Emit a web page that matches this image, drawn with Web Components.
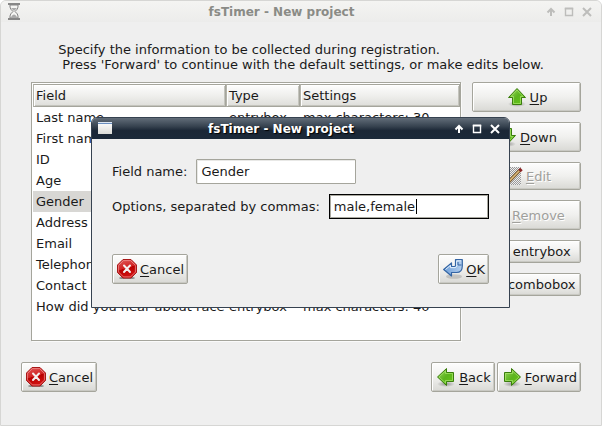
<!DOCTYPE html>
<html lang="en">
<head>
<meta charset="utf-8">
<title>fsTimer - New project</title>
<style>
  body { margin: 0; background: #fff; color: #1a1a1a; font: 13px/15px "DejaVu Sans", sans-serif; }
  .main { min-height: 100vh; }
  .dialog { position: absolute; left: 91px; right: 92px; top: 117px; }
  .intro { margin: 20px auto 10px; width: max-content; white-space: pre; }
  .setup { display: grid; grid-template-columns: 1fr 109px; gap: 11px; margin: 0 20px 0 30px; }
  .side { display: flex; flex-direction: column; gap: 10px; }
  .nav { display: flex; gap: 2px; margin: 21px 20px 33px; }
  .push { margin-left: auto; }
  .form { display: flex; flex-direction: column; gap: 10px; padding: 20px 20px 23px; }
  .actions { display: flex; justify-content: space-between; margin-top: 25px; }
</style>
</head>
<body>
<fs-window class="main" heading="fsTimer - New project" icon="hourglass">
  <div class="intro">Specify the information to be collected during registration.
 Press 'Forward' to continue with the default settings, or make edits below.</div>
  <div class="setup">
    <fs-table></fs-table>
    <div class="side">
      <fs-button icon="up"><u>U</u>p</fs-button>
      <fs-button icon="down"><u>D</u>own</fs-button>
      <fs-button icon="edit" size="medium" disabled><u>E</u>dit</fs-button>
      <fs-button icon="remove" disabled><u>R</u>emove</fs-button>
      <fs-button size="small">Add entrybox</fs-button>
      <fs-button size="small">Add combobox</fs-button>
    </div>
  </div>
  <div class="nav">
    <fs-button icon="cancel"><u>C</u>ancel</fs-button>
    <fs-button class="push" icon="back"><u>B</u>ack</fs-button>
    <fs-button icon="forward"><u>F</u>orward</fs-button>
  </div>
</fs-window>

<fs-window class="dialog" heading="fsTimer - New project" icon="window" active>
  <div class="form">
    <fs-field label="Field name:" value="Gender"></fs-field>
    <fs-field label="Options, separated by commas:" value="male,female" current></fs-field>
    <div class="actions">
      <fs-button icon="cancel"><u>C</u>ancel</fs-button>
      <fs-button icon="ok"><u>O</u>K</fs-button>
    </div>
  </div>
</fs-window>

<script>
const green = id => `<defs><linearGradient id="${id}" x1="0" y1="0" x2="1" y2="1"><stop offset="0" stop-color="#9bd860"/><stop offset=".5" stop-color="#5cb41e"/><stop offset="1" stop-color="#66c814"/></linearGradient>
  <radialGradient id="s"><stop offset="0" stop-opacity=".35"/><stop offset="1" stop-opacity="0"/></radialGradient></defs>
  <ellipse cx="10" cy="17" rx="9" ry="3" fill="url(#s)"/>`;
const arrow = (outer, inner) => green('g') + `<path d="${outer}" fill="url(#g)" stroke="#3a7d0c" stroke-linejoin="round"/><path d="${inner}" fill="none" stroke="#b5ec7c" stroke-opacity=".6"/>`;
const ICONS = {
  up: arrow('M10 1.5L18.5 10.5H14.5V17.5H5.5V10.5H1.5Z', 'M10 3L16 9.5H13.5V16.5H6.5V9.5H4Z'),
  down: arrow('M10 17.5L18.5 8.5H14.5V1.5H5.5V8.5H1.5Z', 'M10 16L16 9.5H13.5V2.5H6.5V9.5H4Z'),
  back: arrow('M1.5 10L10.5 1.5V5.5H17.5V14.5H10.5V18.5Z', 'M3 10L9.5 4V6.5H16.5V13.5H9.5V16Z'),
  forward: arrow('M18.5 10L9.5 1.5V5.5H2.5V14.5H9.5V18.5Z', 'M17 10L10.5 4V6.5H3.5V13.5H10.5V16Z'),
  cancel: `<defs><linearGradient id="r" x1="0" y1="0" x2=".3" y2="1"><stop offset="0" stop-color="#e25c5c"/><stop offset=".55" stop-color="#d02020"/><stop offset=".56" stop-color="#b80000"/><stop offset="1" stop-color="#d01010"/></linearGradient></defs>
    <ellipse cx="10" cy="19" rx="8" ry="1.5" fill="#555" opacity=".6"/>
    <path d="M6 .5H14L19.5 6V13.5L14 19H6L.5 13.5V6Z" fill="url(#r)" stroke="#a81818"/>
    <path d="M6.4 1.6H13.6L18.4 6.4V13.1L13.6 17.9H6.4L1.6 13.1V6.4Z" fill="none" stroke="#f09090" stroke-opacity=".75"/>
    <path d="M7 6.500L13 13M13 6.500L7 13" stroke="#f4eeee" stroke-width="2" stroke-linecap="round"/>`,
  ok: `<defs><linearGradient id="b" x1="0" y1="0" x2="1" y2="0"><stop offset="0" stop-color="#6f9fd8"/><stop offset="1" stop-color="#b4cfee"/></linearGradient></defs>
    <ellipse cx="11" cy="17.500" rx="8" ry="2.300" fill="#000" opacity=".14"/>
    <path d="M.7 10.500L8.500 4V7.500H11.500Q12.500 7.500 12.500 6.500V.7H19.300V7Q19.300 13.500 13.500 13.500H8.500V17Z" fill="url(#b)" stroke="#3465a4" stroke-width="1.200" stroke-linejoin="round"/>
    <path d="M2.500 10.500L7.500 6.300V8.600H12Q13.700 8.400 13.700 6.700V1.800H18.200" fill="none" stroke="#e4f0fc"/><path d="M15 3V6H18.500" fill="none" stroke="#3465a4"/>`,
  edit: `<defs><pattern id="p" width="2" height="2" patternUnits="userSpaceOnUse"><path d="M0 0H1V1H0ZM1 1H2V2H1Z" fill="#999"/></pattern></defs>
    <rect x="2" y="1" width="16" height="18" rx="1" fill="#eee"/><rect x="2" y="1" width="16" height="18" rx="1" fill="url(#p)"/>
    <path d="M5.500 16L16.500 4.500" stroke="#765b34" stroke-width="3.400"/><path d="M5.500 16L16.500 4.500" stroke="#dcb878" stroke-width="1.600"/><path d="M16.500 5L18.500 3" stroke="#8c2525" stroke-width="3.400"/>`,
  remove: `<rect x="3" y="8" width="14" height="4" rx="1" fill="#aaa"/>`,
  hourglass: `<path d="M1 1H13M1 16H13" stroke="#666" stroke-width="1.600"/><path d="M3 2V4Q3 6 6 8.500Q3 11 3 13V15H11V13Q11 11 8 8.500Q11 6 11 4V2Z" fill="#f5f5f3" stroke="#858585"/><path d="M4 5H10L7 8ZM4 15Q4 12.500 7 11.500Q10 12.500 10 15Z" fill="#aaa"/>`,
  window: `<defs><linearGradient id="w" x2="0" y2="1"><stop stop-color="#fff"/><stop offset="1" stop-color="#dcdcd8"/></linearGradient></defs><rect x="0" y="2" width="14" height="12" fill="url(#w)"/><path d="M0 3.500H14" stroke="#6b8fc0"/><path d="M0 2.500H14" stroke="#dce6f2"/>`
};

class FsIcon extends HTMLElement {
  connectedCallback() {
    const name = this.getAttribute('name');
    const box = name === 'hourglass' || name === 'window' ? '0 0 14 17' : '0 0 20 20';
    this.attachShadow({ mode: 'open' }).innerHTML = `<style>:host{display:block;flex:none;width:20px;height:20px}svg{display:block;width:100%;height:100%}</style>
      <svg viewBox="${box}" aria-hidden="true">${ICONS[name] || ''}</svg>`;
  }
}

class FsWindow extends HTMLElement {
  connectedCallback() {
    this.attachShadow({ mode: 'open' }).innerHTML = `<style>
      :host { display: block; box-sizing: border-box; background: #efefef; border: 1px solid #d6d6d4; border-radius: 6px 6px 0 0; overflow: hidden; }
      :host([active]) { border-color: #364250; }
      header { display: flex; align-items: center; height: 21px; padding: 0 5px 0 6px; background: linear-gradient(#f4f4f2, #ececeb); color: #8a8b86; }
      :host([active]) header { background: linear-gradient(#626d79, #36424f 40%, #1b2736 60%, #1b2939); color: #fff; text-shadow: 1px 1px 1px #000; }
      fs-icon { width: 14px; height: 17px; }
      h1 { flex: 1; margin: 0; padding: 2px 0 0; text-align: center; font-size: 12px; line-height: 15px; font-weight: bold; }
      button { width: 18px; height: 18px; padding: 0; border: 0; background: none; color: #bdbdbb; }
      :host([active]) button { color: #fff; }
      svg { display: block; margin: auto; fill: none; stroke: currentColor; stroke-width: 2; }
    </style>
    <header><fs-icon name="${this.getAttribute('icon')}"></fs-icon><h1>${this.getAttribute('heading')}</h1>
      <button aria-label="Shade"><svg width="10" height="10"><path d="M5 9V2M1.500 5.500L5 2L8.500 5.500"/></svg></button>
      <button aria-label="Maximize"><svg width="10" height="10"><path d="M1.500 1V8.500H8.500V1" stroke-width="1.400"/><path d="M.8 1.600H9.200"/></svg></button>
      <button aria-label="Close"><svg width="10" height="10"><path d="M1 1L9 9M9 1L1 9"/></svg></button>
    </header><slot></slot>`;
  }
}

class FsButton extends HTMLElement {
  connectedCallback() {
    const icon = this.getAttribute('icon');
    this.attachShadow({ mode: 'open' }).innerHTML = `<style>
      :host { display: block; }
      button { display: flex; align-items: center; justify-content: center; gap: 3px; box-sizing: border-box; width: 100%; height: 30px; padding: 0 3px 0 4px;
        border: 1px solid #a5a59c; border-radius: 2px; background: linear-gradient(#fdfdfd, #f0f0ee 50%, #d9d9d5); box-shadow: inset 1px 1px #fff, inset -1px -1px #c9c9c3; color: #1a1a1a; font: inherit; white-space: nowrap; }
      :host([size=medium]) button { height: 28px; }
      :host([size=small]) button { height: 23px; }
      :host([disabled]) button { color: #a0a09c; text-shadow: 1px 1px #fff; }
      ::slotted(u) { text-underline-offset: 2px; text-decoration-thickness: 1px; text-decoration-skip-ink: none; }
    </style><button ${this.hasAttribute('disabled') ? 'disabled' : ''}>${icon ? `<fs-icon name="${icon}"></fs-icon>` : ''}<span><slot></slot></span></button>`;
  }
}

class FsField extends HTMLElement {
  connectedCallback() {
    this.attachShadow({ mode: 'open' }).innerHTML = `<style>
      :host { display: flex; align-items: center; gap: 9px; }
      label { white-space: nowrap; }
      input { flex: none; box-sizing: border-box; width: 160px; height: 25px; padding: 0 4px; border: 1px solid #a5a59c; border-radius: 1px; background: #fff; box-shadow: inset 1px 1px #e8e8e6; color: #1a1a1a; font: inherit; outline: 0; }
      :host([current]) input { border-color: #000; box-shadow: inset 0 0 0 1px #aaa9a0; border-radius: 0;
        background: linear-gradient(#000, #000) 86px 4px / 1px 15px no-repeat #fff; }
    </style><label for="f">${this.getAttribute('label')}</label><input id="f" type="text" value="${this.getAttribute('value')}">`;
  }
}

class FsTable extends HTMLElement {
  connectedCallback() {
    const rows = [['Last name', 'entrybox', 'max characters: 30'], ['First name'], ['ID'], ['Age'], ['Gender'], ['Address'], ['Email'], ['Telephone'], ['Contact for'],
      ['How did you hear about race', 'entrybox', 'max characters: 40']];
    this.attachShadow({ mode: 'open' }).innerHTML = `<style>
      :host { display: block; box-sizing: border-box; min-height: 259px; padding: 1px 0 0 1px; border: 1px solid #a5a59c; background: #fff; box-shadow: 1px 1px #fafafa; }
      table { width: 100%; table-layout: fixed; border-collapse: separate; border-spacing: 0; }
      th { box-sizing: border-box; height: 23px; padding: 0 2px; border: 1px solid #a5a59c; border-left-color: #b5b5ac; background: linear-gradient(#fdfdfd, #efefed 50%, #dededa); box-shadow: inset 1px 1px #fff, inset -1px -1px #c4c4bd; text-align: left; font-weight: normal; }
      td { height: 21px; padding: 0 0 0 3px; overflow: hidden; white-space: nowrap; }
      .picked td { background: #d8d7d4; }
    </style><table><colgroup><col style="width:193px"><col style="width:74px"><col></colgroup>
    <thead><tr><th>Field</th><th>Type</th><th>Settings</th></tr></thead>
    <tbody>${rows.map(r => `<tr${r[0] === 'Gender' ? ' class="picked"' : ''}>${[0, 1, 2].map(i => `<td>${r[i] || ''}</td>`).join('')}</tr>`).join('')}</tbody></table>`;
  }
}
customElements.define('fs-icon', FsIcon);
customElements.define('fs-window', FsWindow);
customElements.define('fs-button', FsButton);
customElements.define('fs-field', FsField);
customElements.define('fs-table', FsTable);
</script>
</body>
</html>
